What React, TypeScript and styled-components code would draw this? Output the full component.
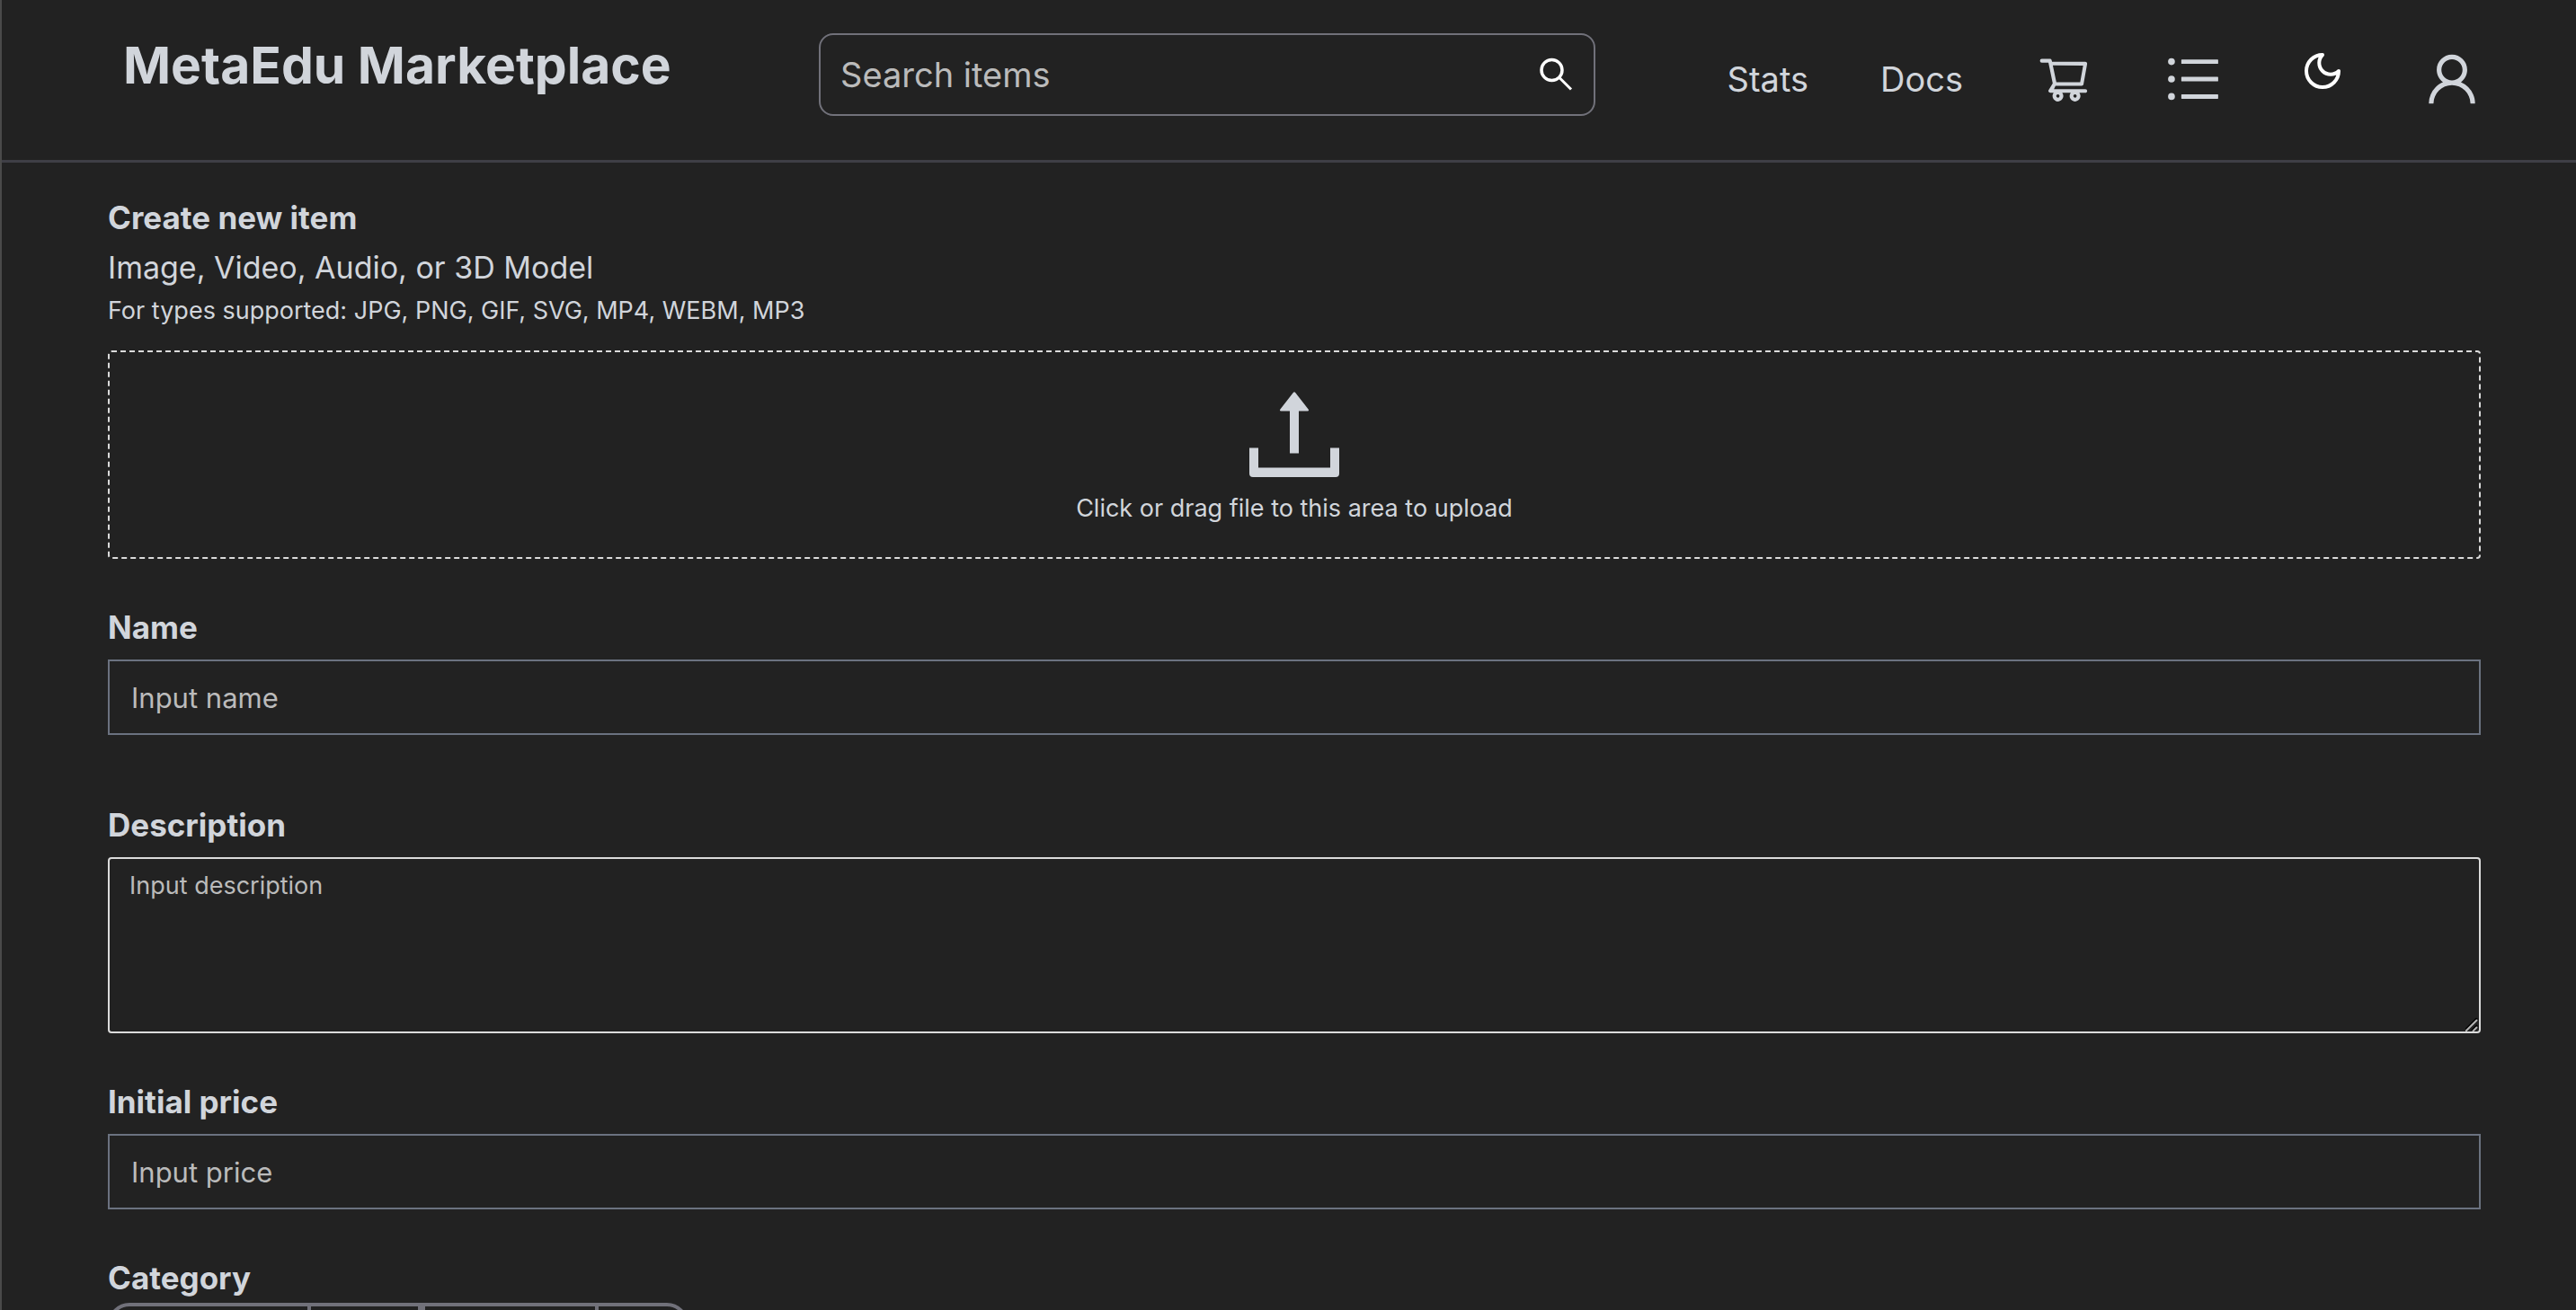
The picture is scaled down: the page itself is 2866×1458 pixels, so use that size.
import React from "react";
import styled, { createGlobalStyle } from "styled-components";
import { AiOutlineShoppingCart, AiOutlineUnorderedList, AiOutlineUser } from "react-icons/ai";

const GlobalStyle = createGlobalStyle`
  *, *::before, *::after { box-sizing: border-box; }
  html, body { margin: 0; background: #222222; }
  body { height: 100vh; overflow: hidden; font-family: Inter, Roboto, sans-serif; color: #d1d5db; }
  #root { height: 100%; }
  input, textarea, button { font-family: inherit; color: inherit; }
  input::placeholder, textarea::placeholder { color: #bbbbbb; opacity: 1; }
`;

const Page = styled.div`
  height: 100%;
  overflow: hidden;
  border-left: 2px solid #4a4a4a;
`;

const Header = styled.header`
  display: grid;
  grid-template-columns: 774px minmax(0, 864px) 1fr;
  align-items: start;
  height: 181px;
  padding: 37px 106px 0 135px;
  border-bottom: 3px solid #3f3f46;
`;

const Brand = styled.h1`
  margin: 0;
  font-size: 57px;
  line-height: 72px;
  font-weight: 700;
  white-space: nowrap;
`;

const SearchBox = styled.label`
  display: flex;
  align-items: center;
  height: 92px;
  padding: 0 20px 0 22px;
  border: 2px solid #71717a;
  border-radius: 16px;
  color: #ffffff;
`;

const SearchInput = styled.input`
  flex: 1;
  min-width: 0;
  padding: 0;
  border: 0;
  outline: 0;
  background: transparent;
  font-size: 38px;
  line-height: 48px;
`;

const Nav = styled.nav`
  display: flex;
  justify-content: flex-end;
  align-items: center;
  gap: 80px;
  height: 102px;
`;

const NavLink = styled.a`
  color: inherit;
  text-decoration: none;
  font-size: 38px;
  line-height: 48px;
`;

const IconButton = styled.button<{ $raised?: boolean }>`
  display: flex;
  align-items: center;
  justify-content: center;
  width: 64px;
  height: 64px;
  padding: 0;
  border: 0;
  background: transparent;
  color: ${(p) => (p.$raised ? "#ffffff" : "inherit")};
  margin-bottom: ${(p) => (p.$raised ? "18px" : "0")};

  svg {
    flex: none;
  }
`;

const Form = styled.form`
  display: flex;
  flex-direction: column;
  padding: 39px 106px 0 118px;
`;

const Title = styled.h2`
  margin: 0;
  font-size: 35px;
  line-height: 44px;
  font-weight: 700;
`;

const Lead = styled.p`
  margin: 12px 0 0;
  font-size: 34px;
  line-height: 44px;
`;

const Hint = styled.p`
  margin: 4px 0 0;
  font-size: 27px;
  line-height: 44px;
`;

const DropZone = styled.label`
  display: flex;
  flex-direction: column;
  align-items: center;
  height: 232px;
  margin-top: 22px;
  padding-top: 44px;
  border: 2px dashed #dbdbdb;
  border-radius: 4px;
  font-size: 27px;
  line-height: 44px;
`;

const FileInput = styled.input`
  display: none;
`;

const DropText = styled.span`
  margin-top: 12px;
`;

const Field = styled.div<{ $gap: number }>`
  display: flex;
  flex-direction: column;
  gap: 14px;
  margin-top: ${(p) => p.$gap}px;
`;

const Label = styled.label`
  font-size: 35px;
  line-height: 44px;
  font-weight: 700;
`;

const TextInput = styled.input`
  height: 84px;
  padding: 0 24px;
  border: 2px solid #6b7280;
  border-radius: 0;
  outline: 0;
  background: transparent;
  font-size: 31px;
`;

const TextArea = styled.textarea`
  display: block;
  height: 196px;
  padding: 8px 22px;
  border: 2px solid #dbdbdb;
  border-radius: 4px;
  outline: 0;
  background: transparent;
  font-size: 27px;
  line-height: 44px;
  resize: vertical;

  &::-webkit-resizer {
    background: url("data:image/svg+xml,%3Csvg xmlns='http://www.w3.org/2000/svg' width='15' height='15' fill='none'%3E%3Cpath d='M-1 14L13 0M7 14L13 8' stroke='%23000' stroke-width='2'/%3E%3Cpath d='M0 15L13 2M8 15L13 10' stroke='%23b4b4b4' stroke-width='2'/%3E%3C/svg%3E") no-repeat right bottom;
  }
`;

const Fieldset = styled.fieldset`
  min-width: 0;
  margin: 54px 0 0;
  padding: 0;
  border: 0;
`;

const Legend = styled.legend`
  padding: 0;
  font-size: 35px;
  line-height: 44px;
  font-weight: 700;
`;

const Segments = styled.div`
  display: flex;
  width: max-content;
  height: 76px;
  margin-top: 6px;
  border: 4px solid #71717a;
  border-radius: 24px;
  overflow: hidden;
`;

const Segment = styled.button<{ $width: number; $divider: number }>`
  width: ${(p) => p.$width}px;
  padding: 0;
  border: 0;
  border-right: ${(p) => p.$divider}px solid #71717a;
  background: transparent;
`;

const SEGMENTS = [
  { width: 222, divider: 4 },
  { width: 127, divider: 8 },
  { width: 193, divider: 4 },
  { width: 96, divider: 0 },
];

const SearchIcon = () => (
  <svg width="44" height="44" viewBox="0 0 44 44" fill="none" stroke="currentColor" strokeWidth="3.500">
    <circle cx="17.5" cy="17" r="11.5" />
    <path d="M25.500 25L39 38.500" strokeWidth="3" />
  </svg>
);

const MoonIcon = () => (
  <svg width="48" height="48" viewBox="0 0 24 24" fill="none" stroke="currentColor" strokeWidth="2" strokeLinejoin="round">
    <path d="M12 3a6 6 0 0 0 9 9 9 9 0 1 1-9-9Z" />
  </svg>
);

const UploadIcon = () => (
  <svg width="100" height="96" viewBox="0 0 100 96" fill="currentColor">
    <path d="M49 .8q1-1.200 2 0L65.600 19.500q1.200 2-.8 2H55V68.500H45V21.500H35.200q-2 0-.8-2z" />
    <path d="M0 62.500H10V84.500H90V62.500H100V91q0 4-4 4H4q-4 0-4-4z" />
  </svg>
);

export default function App() {
  return (
    <>
      <GlobalStyle />
      <Page>
        <Header>
          <Brand>MetaEdu Marketplace</Brand>
          <SearchBox>
            <SearchInput type="text" placeholder="Search items" aria-label="Search items" />
            <SearchIcon />
          </SearchBox>
          <Nav>
            <NavLink href="#stats">Stats</NavLink>
            <NavLink href="#docs">Docs</NavLink>
            <IconButton type="button" aria-label="Cart"><AiOutlineShoppingCart size={60} /></IconButton>
            <IconButton type="button" aria-label="Menu"><AiOutlineUnorderedList size={70} /></IconButton>
            <IconButton type="button" aria-label="Dark mode" $raised><MoonIcon /></IconButton>
            <IconButton type="button" aria-label="Account"><AiOutlineUser size={70} /></IconButton>
          </Nav>
        </Header>
        <Form>
          <Title>Create new item</Title>
          <Lead>Image, Video, Audio, or 3D Model</Lead>
          <Hint>For types supported: JPG, PNG, GIF, SVG, MP4, WEBM, MP3</Hint>
          <DropZone>
            <FileInput type="file" />
            <UploadIcon />
            <DropText>Click or drag file to this area to upload</DropText>
          </DropZone>
          <Field $gap={54}>
            <Label htmlFor="name">Name</Label>
            <TextInput id="name" placeholder="Input name" />
          </Field>
          <Field $gap={78}>
            <Label htmlFor="description">Description</Label>
            <TextArea id="description" placeholder="Input description" />
          </Field>
          <Field $gap={54}>
            <Label htmlFor="price">Initial price</Label>
            <TextInput id="price" placeholder="Input price" />
          </Field>
          <Fieldset>
            <Legend>Category</Legend>
            <Segments>
              {SEGMENTS.map((s, i) => (
                <Segment key={i} type="button" $width={s.width} $divider={s.divider} />
              ))}
            </Segments>
          </Fieldset>
        </Form>
      </Page>
    </>
  );
}
